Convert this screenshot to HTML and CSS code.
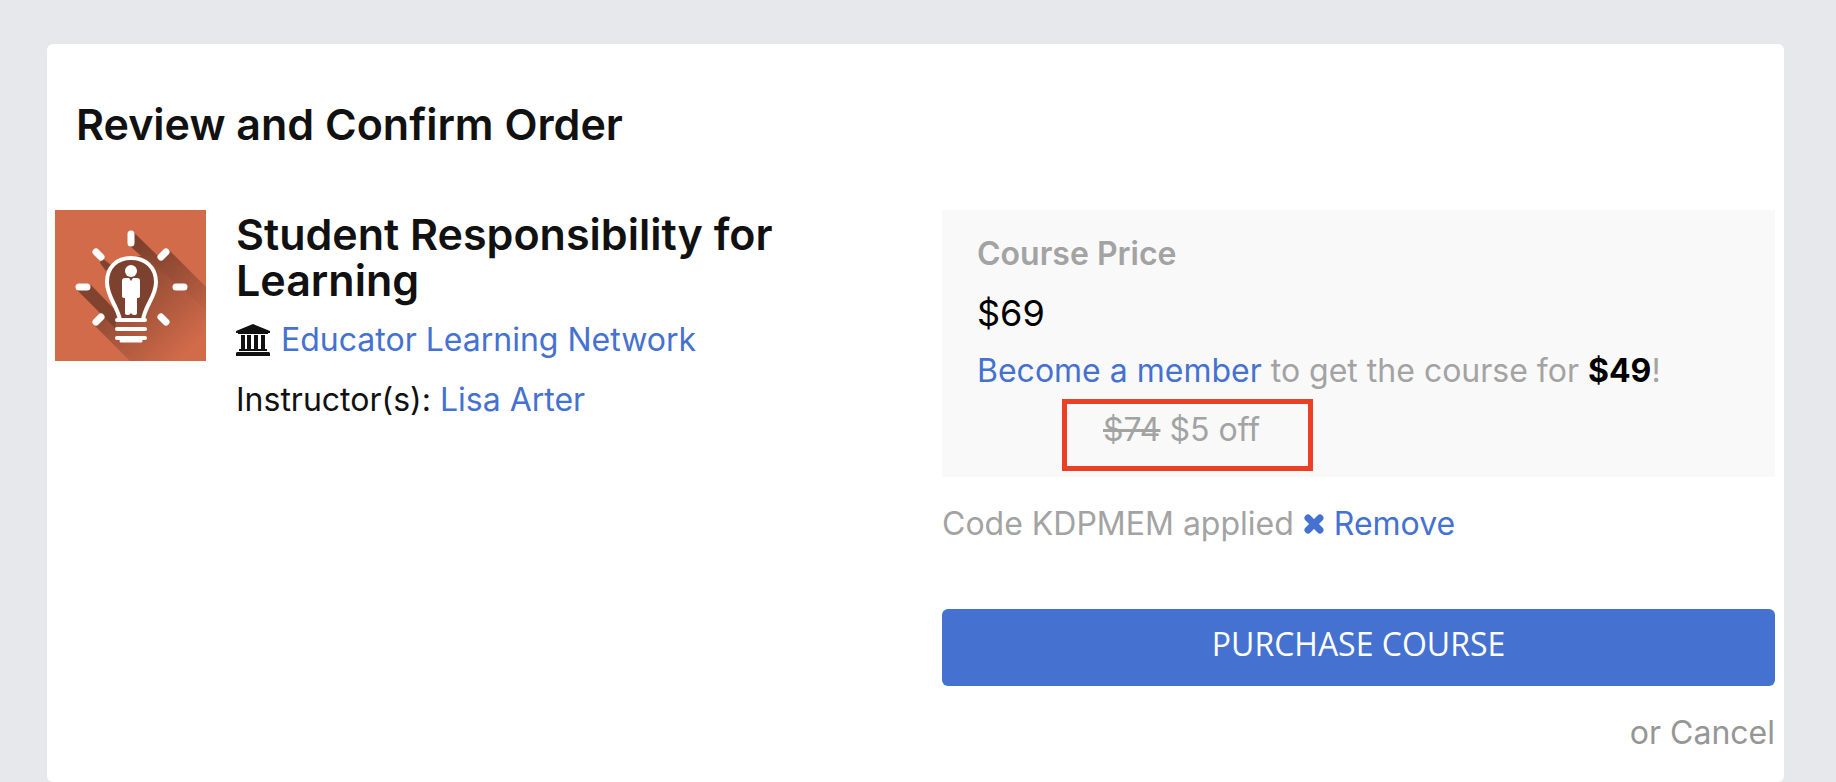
FILE: index.html
```html
<!DOCTYPE html>
<html lang="en">
  <head>
    <meta charset="UTF-8" />
    <meta name="viewport" content="width=device-width, initial-scale=1.0" />
    <title>Review and Confirm Order</title>
    <link rel="stylesheet" href="styles.css">
  </head>
  <body>
    <main class="card">
      <h1>Review and Confirm Order</h1>

      <div class="order">
        <!-- Course -->
        <section class="course">
          <svg class="thumb" viewBox="0 0 151 151" role="img" aria-label="Course image">
            <defs>
              <linearGradient id="shade" gradientUnits="userSpaceOnUse" x1="60" y1="50" x2="140" y2="135">
                <stop offset="0" stop-color="#7d402c" />
                <stop offset="1" stop-color="#7d402c" stop-opacity="0" />
              </linearGradient>
              <linearGradient id="shadeTop" gradientUnits="userSpaceOnUse" x1="80" y1="20" x2="150" y2="90">
                <stop offset="0" stop-color="#7d402c" />
                <stop offset="1" stop-color="#7d402c" stop-opacity="0.2" />
              </linearGradient>
            </defs>
            <rect width="151" height="151" fill="#d16b4a" />
            <path d="M22 80L36 75L62 102L60 118L48 106Z" fill="#81432f" />
            <path d="M47 48L56 55L51 61L45 53Z" fill="#81432f" />
            <path d="M78 22L103 46L114 40L151 77V151H75L39 115L49 105L61 110V98L52 72L57 56L76 47L86 46L73 34Z" fill="url(#shade)" />
            <path d="M79 22L103 46L114 40L151 77V100L100 55L73 35Z" fill="url(#shadeTop)" opacity="0.4" />
            <path d="M76 48C62 48 53 58 53 72C53 87 62 95 65 110H88C91 95 101 87 101 72C101 58 91 48 76 48Z" fill="#7d422f" />
            <g fill="none" stroke="#fff" stroke-width="7" stroke-linecap="round">
              <path d="M76 24V33M24 77H32M121 77H129M41 42L46 47M111 42L106 47M41 112L46 107M111 112L106 107" />
            </g>
            <path d="M65 110C62 95 52 87 52 72C52 57 62 48 76 48C90 48 101 57 101 72C101 87 90 95 88 110" fill="none" stroke="#fff" stroke-width="4" />
            <path d="M62 110H90M62 119H90M62 128H90" stroke="#fff" stroke-width="4" stroke-linecap="round" />
            <path d="M66 131H86" stroke="#fff" stroke-width="3" stroke-linecap="round" />
            <circle cx="76" cy="61" r="6" fill="#fff" />
            <path d="M70 68H74L76 71L78 68H82Q85 68 85 71V86Q85 88 82 88V103Q82 105 79 105Q77 105 76 103Q75 105 73 105Q70 105 70 103V88Q67 88 67 86V71Q67 68 70 68Z" fill="#fff" />
          </svg>
          <div class="details">
            <h2>Student Responsibility for Learning</h2>
            <p>
              <svg class="icon-bank" viewBox="0 0 34 32" aria-hidden="true">
                <path d="M17 0L34 7V9H32V10H2V9H0V7ZM5 11H9V25H11V11H15V25H18V11H22V25H25V11H29V25H31V27H3V25H5ZM1 28H33L34 29V32H0V29Z" fill="#111" />
              </svg>
              <a href="#">Educator Learning Network</a>
            </p>
            <p>Instructor(s): <a href="#">Lisa Arter</a></p>
          </div>
        </section>

        <!-- Price and checkout -->
        <section class="checkout">
          <div class="price-box">
            <h3>Course Price</h3>
            <p class="price">$69</p>
            <p class="member"><a href="#">Become a member</a> to get the course for <strong>$49</strong>!</p>
            <p class="discount"><del>$74</del> $5 off</p>
          </div>
          <p class="code">
            Code KDPMEM applied
            <a href="#"><svg class="icon-remove" viewBox="0 0 22 22" aria-hidden="true"><path d="M5 5L17 17M17 5L5 17" stroke="#4571d1" stroke-width="7" stroke-linecap="round" /></svg>
            Remove</a>
          </p>
          <button type="submit" class="btn">PURCHASE COURSE</button>
          <p class="cancel"><a href="#">or Cancel</a></p>
        </section>
      </div>
    </main>
  </body>
</html>
```
FILE: styles.css
```css
* {
  box-sizing: border-box;
}

body {
  margin: 0;
  padding: 44px 52px 0 47px;
  background-color: #e7e8ec;
  color: #111111;
  font-family: Inter, "Liberation Sans", sans-serif;
  font-size: 32px;
  line-height: 58px;
}

h1,
h2,
h3,
p {
  margin: 0;
}

a {
  color: #4571d1;
  text-decoration: none;
}

.card {
  padding: 56px 9px 20px 8px;
  background-color: #ffffff;
  border-radius: 6px;
}

h1 {
  padding-left: 21px;
  font-size: 43px;
  font-weight: 600;
  line-height: 48px;
}

.order {
  display: grid;
  grid-template-columns: 1fr 1fr;
  gap: 54px;
  margin-top: 62px;
}

.course {
  display: flex;
  align-items: flex-start;
  gap: 30px;
}

.thumb {
  flex: none;
  width: 151px;
  height: 151px;
}

.details {
  line-height: 60px;
}

h2 {
  margin: 1px 0 7px;
  font-size: 43px;
  font-weight: 600;
  line-height: 46px;
}

.icon-bank {
  width: 34px;
  height: 32px;
  margin-right: 2px;
  vertical-align: -5px;
}

.price-box {
  padding: 15px 35px 6px;
  background-color: #f9f9f9;
  color: #a3a3a3;
}

h3 {
  font-size: 32px;
  font-weight: 600;
}

.price {
  color: #000000;
  font-size: 36px;
  line-height: 60px;
}

.member {
  line-height: 56px;
}

.member strong {
  color: #000000;
}

.discount {
  width: fit-content;
  margin-left: 85px;
  padding: 0 48px 10px 36px;
  border: 5px solid #eb4025;
  line-height: 52px;
}

.code {
  margin-top: 18px;
  color: #a3a3a3;
}

.icon-remove {
  width: 22px;
  height: 22px;
}

.btn {
  display: block;
  width: 100%;
  margin: 56px 0 18px;
  padding: 11px 20px 18px;
  border: none;
  border-radius: 6px;
  background-color: #4571d1;
  color: #ffffff;
  font-family: "Open Sans", sans-serif;
  font-size: 32px;
  font-weight: 500;
  line-height: 48px;
  cursor: pointer;
}

.btn:hover {
  background-color: #3a64c0;
}

.cancel {
  text-align: right;
}

.cancel a {
  color: #969696;
}
```
